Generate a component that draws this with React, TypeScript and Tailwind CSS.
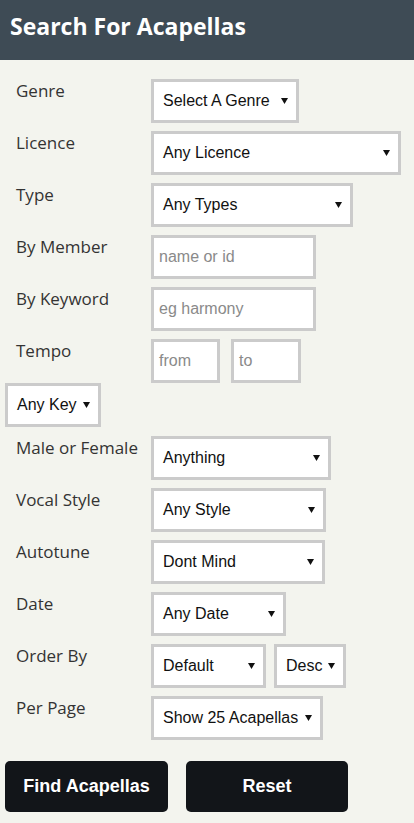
import React from 'react';

const Arrow = () => (
    <svg width="7" height="6" viewBox="0 0 7 6" className="shrink-0">
        <path d="M0 0 L7 0 L3.5 6 Z" fill="#111" />
    </svg>
);

const Select = ({ label, w }: { label: string; w: string }) => (
    <div className={`${w} h-[44px] shrink-0 border-[3px] border-[#cbcbcb] bg-white flex items-center justify-between pl-[9px] pr-[8px] text-[16px] text-[#111] font-['Liberation_Sans',Arial,sans-serif]`}>
        <span className="whitespace-nowrap">{label}</span>
        <Arrow />
    </div>
);

const Input = ({ placeholder, w }: { placeholder: string; w: string }) => (
    <div className={`${w} h-[44px] shrink-0 border-[3px] border-[#cbcbcb] bg-white flex items-center pl-[5px] text-[16px] text-[#8a8a8a] font-['Liberation_Sans',Arial,sans-serif]`}>
        <span className="whitespace-nowrap">{placeholder}</span>
    </div>
);

const Row = ({ label, children, className = '' }: { label: string; children: React.ReactNode; className?: string }) => (
    <div className={`flex ${className}`}>
        <div className="w-[151px] shrink-0 pl-4 text-[17px] leading-6 text-[#333] font-['Open_Sans',sans-serif] whitespace-nowrap">
            {label}
        </div>
        <div className="flex gap-[8px]">{children}</div>
    </div>
);

export default function App() {
    return (
        <div className="min-h-screen w-[414px] bg-[#f3f4ee]">
            {/* header */}
            <div className="h-[60px] bg-[#3e4b55] flex items-center px-[10px] pb-[7px]">
                <h1 className="text-white text-[23px] font-bold font-['Open_Sans',sans-serif]">
                    Search For Acapellas
                </h1>
            </div>

            <div className="flex flex-col pt-[19px] pb-[11px]">
                <Row label="Genre">
                    <Select label="Select A Genre" w="w-[148px]" />
                </Row>
                <Row label="Licence" className="mt-2">
                    <Select label="Any Licence" w="w-[250px]" />
                </Row>
                <Row label="Type" className="mt-2">
                    <Select label="Any Types" w="w-[202px]" />
                </Row>
                <Row label="By Member" className="mt-2">
                    <Input placeholder="name or id" w="w-[165px]" />
                </Row>
                <Row label="By Keyword" className="mt-2">
                    <Input placeholder="eg harmony" w="w-[165px]" />
                </Row>
                <Row label="Tempo" className="mt-2">
                    <div className="flex gap-[11px]">
                        <Input placeholder="from" w="w-[69px]" />
                        <Input placeholder="to" w="w-[70px]" />
                    </div>
                </Row>

                <div className="pl-[5px]">
                    <Select label="Any Key" w="w-[96px]" />
                </div>

                <Row label="Male or Female" className="mt-[9px]">
                    <Select label="Anything" w="w-[180px]" />
                </Row>
                <Row label="Vocal Style" className="mt-2">
                    <Select label="Any Style" w="w-[175px]" />
                </Row>
                <Row label="Autotune" className="mt-2">
                    <Select label="Dont Mind" w="w-[174px]" />
                </Row>
                <Row label="Date" className="mt-2">
                    <Select label="Any Date" w="w-[135px]" />
                </Row>
                <Row label="Order By" className="mt-2">
                    <Select label="Default" w="w-[115px]" />
                    <Select label="Desc" w="w-[72px]" />
                </Row>
                <Row label="Per Page" className="mt-2">
                    <Select label="Show 25 Acapellas" w="w-[172px]" />
                </Row>

                {/* buttons */}
                <div className="flex gap-[18px] pl-[5px] mt-[21px]">
                    <button className="w-[163px] h-[51px] rounded-[5px] bg-[#121519] text-white text-[18px] font-bold font-['Liberation_Sans',Arial,sans-serif]">
                        Find Acapellas
                    </button>
                    <button className="w-[162px] h-[51px] rounded-[5px] bg-[#121519] text-white text-[18px] font-bold font-['Liberation_Sans',Arial,sans-serif]">
                        Reset
                    </button>
                </div>
            </div>
        </div>
    );
}
